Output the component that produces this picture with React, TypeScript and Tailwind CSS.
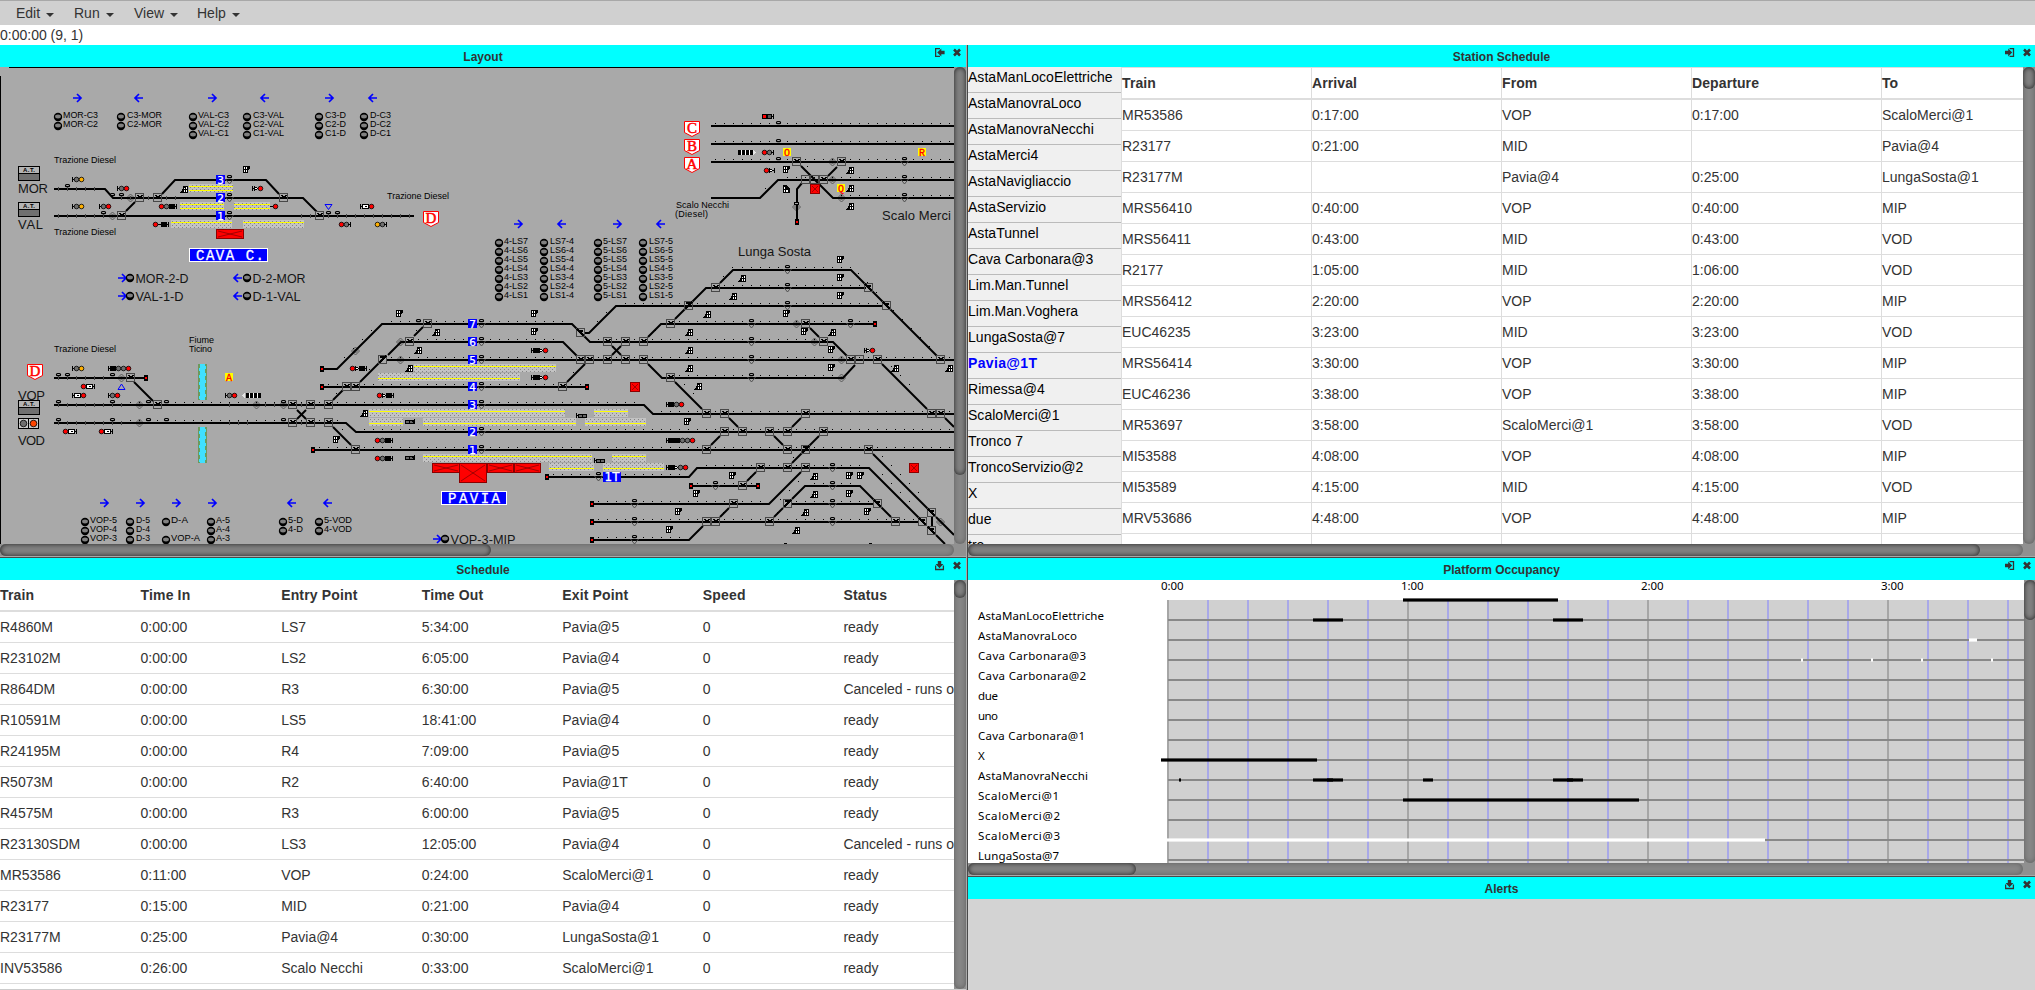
import React from "react";

const sans = "font-['Liberation_Sans',Arial,sans-serif]";

/* ---------- track diagram helpers: 9px cells, rows measured from y = 67 ---------- */
const colX = (c: number) => c * 9;
const rowY = (r: number) => 72 + r * 9;

const tracks: number[][] = [
  [54, 189, 105, 189, 113, 198, 303, 198, 317, 212],
  [54, 216, 414, 216],
  [162, 194, 175, 180, 266, 180, 279, 194],
  [126, 211, 135, 202],
  [711, 126, 954, 126],
  [711, 144, 954, 144],
  [711, 162, 954, 162],
  [711, 198, 760, 198, 778, 180, 954, 180],
  [801, 166, 833, 198, 954, 198],
  [837, 167, 828, 176],
  [802, 183, 797, 189, 797, 220],
  [675, 319, 706, 288, 866, 288],
  [720, 283, 733, 270, 851, 270, 937, 356],
  [584, 333, 589, 333, 616, 306, 882, 306],
  [320, 369, 337, 369, 382, 324, 572, 324, 590, 342, 833, 342, 847, 356],
  [648, 337, 661, 324, 875, 324],
  [388, 355, 401, 342, 563, 342, 577, 356],
  [387, 360, 954, 360],
  [414, 336, 423, 327],
  [360, 382, 382, 360],
  [333, 400, 343, 390],
  [322, 387, 587, 387],
  [567, 382, 585, 364],
  [648, 364, 662, 378, 843, 378, 855, 365],
  [675, 382, 702, 409],
  [54, 405, 644, 405, 653, 414, 954, 414],
  [54, 423, 346, 423, 356, 432, 954, 432],
  [313, 450, 954, 450],
  [333, 427, 351, 445],
  [297, 410, 306, 419],
  [306, 410, 297, 419],
  [612, 346, 621, 355],
  [621, 346, 612, 355],
  [729, 418, 738, 427],
  [711, 445, 720, 436],
  [801, 418, 792, 427],
  [774, 436, 783, 445],
  [819, 436, 792, 463],
  [882, 364, 927, 409],
  [945, 418, 954, 427],
  [810, 328, 819, 337],
  [547, 477, 689, 477, 697, 468, 869, 468, 919, 518],
  [691, 486, 758, 486],
  [747, 481, 756, 472],
  [592, 504, 769, 504, 801, 472],
  [792, 504, 873, 504],
  [792, 499, 805, 486, 860, 486, 891, 517],
  [783, 508, 774, 517],
  [592, 522, 918, 522],
  [720, 517, 729, 508],
  [592, 540, 689, 540, 703, 526],
  [873, 454, 928, 509],
  [936, 517, 954, 535],
  [932, 517, 932, 527],
  [936, 535, 945, 544],
  [54, 378, 146, 378],
  [134, 382, 153, 401],
];

const dotRuns: [number, number, number][] = [
  [6, 79, 105], [8, 79, 105], [10, 79, 105], [12, 87, 105], [14, 93, 105],
  [22, 82, 94], [24, 79, 95], [26, 69, 97], [28, 43, 62], [28, 74, 96], [30, 45, 61],
  [30, 66, 91], [32, 43, 105], [34, 74, 92], [35, 36, 64], [37, 14, 70], [38, 73, 105],
  [39, 14, 37], [40, 40, 105], [42, 35, 105], [44, 78, 95], [45, 61, 75], [46, 77, 83],
  [46, 90, 94], [48, 66, 84], [48, 88, 96], [50, 66, 101], [52, 66, 75],
];
/* single dots beside diagonal track: x, y */
const diagonalDots: [number, number][] = [
  [723, 276], [732, 267], [858, 273], [867, 282], [876, 292], [893, 310], [902, 319], [911, 328],
  [920, 337], [929, 346], [687, 303], [597, 321], [606, 312], [371, 330], [362, 339], [353, 348],
  [344, 357], [416, 330], [369, 369], [336, 393], [573, 372], [655, 330], [684, 384], [693, 393],
  [342, 429], [780, 499], [789, 490], [798, 481], [882, 474], [891, 483], [900, 492], [909, 501],
  [882, 456], [891, 465], [900, 474], [909, 483], [918, 492], [891, 366], [900, 375], [909, 384],
  [777, 512], [723, 512], [750, 476], [793, 457], [807, 166], [812, 176], [822, 187], [765, 188],
];
const tickRuns: [number, number[]][] = [
  [13, [6, 7, 8, 9, 10]],
  [14, [13, 14, 16, 18, 19]],
  [16, [6, 7, 8, 9, 10, 11, 33, 34, 36, 37, 38, 39, 40, 41, 42, 43, 44, 45]],
  [34, [6, 7, 8, 9, 10, 11]],
  [37, [6, 7, 8, 9, 10, 11, 12, 13, 25, 29, 30, 33]],
  [39, [6, 7, 8, 9, 10, 11, 12, 13, 25, 26, 27, 33]],
];

/* col, row, kind: 0 bowl, 1 rising diagonal, 2 falling diagonal, 3 empty */
const switches: [number, number, number][] = [
  [15, 14, 0], [17, 14, 0], [13, 16, 0], [31, 14, 0], [35, 16, 0],
  [14, 34, 0], [17, 37, 0], [32, 37, 0], [34, 37, 0], [36, 37, 0],
  [32, 39, 0], [34, 39, 0], [36, 39, 0], [39, 42, 0], [38, 35, 0], [39, 35, 0],
  [42, 32, 1], [45, 30, 0], [47, 28, 0], [64, 29, 2], [74, 28, 0], [89, 28, 0],
  [76, 26, 1], [98, 26, 2], [67, 30, 0], [69, 30, 0], [71, 30, 0], [91, 30, 0],
  [64, 32, 0], [65, 32, 0], [67, 32, 0], [69, 32, 0], [71, 32, 0], [94, 32, 0],
  [95, 32, 3], [97, 32, 0], [104, 32, 0], [74, 34, 0], [62, 35, 0],
  [78, 38, 0], [80, 38, 0], [89, 38, 0], [103, 38, 0], [104, 38, 0],
  [80, 40, 0], [82, 40, 0], [85, 40, 0], [87, 40, 0], [91, 40, 0],
  [78, 42, 0], [87, 42, 0], [89, 42, 1], [96, 42, 0],
  [84, 44, 0], [87, 44, 0], [89, 44, 0], [82, 46, 0],
  [81, 48, 0], [87, 48, 1], [97, 48, 2], [78, 50, 0], [79, 50, 0], [85, 50, 0],
  [99, 50, 0], [102, 50, 2], [103, 49, 2], [103, 51, 2],
  [88, 10, 0], [93, 10, 0], [89, 12, 3], [90, 12, 3], [91, 12, 0], [79, 24, 0], [96, 24, 2],
];

const loops: [number, number][] = [
  [7, 13], [12, 14], [13, 14], [11, 16], [36, 16], [37, 16], [86, 6], [86, 8], [86, 10],
  [6, 34], [7, 34], [12, 34], [6, 37], [12, 37], [16, 37], [18, 37], [31, 37],
  [6, 39], [12, 39], [16, 39], [18, 39], [31, 39], [46, 28],
];
const pins: [number, number][] = [
  [25, 12], [25, 14], [25, 16], [100, 10], [100, 12], [100, 14], [87, 22], [87, 24],
  [53, 28], [53, 30], [53, 32], [53, 35], [53, 37], [53, 40], [53, 42], [87, 26],
  [83, 28], [94, 28], [83, 30], [83, 32], [83, 34], [66, 45], [92, 44], [79, 46],
  [92, 46], [70, 48], [92, 48], [70, 50], [92, 50], [70, 52],
];
const diamonds: [number, number][] = [
  [14, 14], [12, 16], [92, 10], [92, 12], [93, 14], [88, 15], [13, 34], [15, 37], [15, 39],
  [28, 37], [31, 37], [39, 31], [44, 30], [44, 32], [88, 28], [90, 30], [93, 32], [93, 34],
  [104, 50],
];
const bumpers: [number, number][] = [
  [797, 222], [322, 369], [322, 387], [587, 387], [146, 378], [313, 450], [875, 324],
  [547, 477], [691, 486], [758, 486], [592, 504], [592, 522], [592, 540],
];
const flagsDown: [number, number][] = [
  [246, 169], [786, 169], [840, 259], [840, 277], [840, 295], [534, 313], [534, 331],
  [786, 313], [804, 331], [831, 349], [831, 367], [687, 421], [732, 475], [696, 493],
  [678, 511], [669, 529], [849, 475], [860, 475], [849, 493], [867, 511], [399, 313], [336, 439],
];
const flagsUp: [number, number][] = [
  [184, 190], [850, 171], [850, 189], [850, 207], [742, 279], [733, 297], [707, 315],
  [689, 333], [689, 351], [689, 369], [698, 387], [832, 333], [895, 369], [949, 369],
  [814, 477], [814, 495], [805, 513], [796, 531], [436, 333], [418, 351], [409, 369], [364, 414],
];
const signals: [number, number, string][] = [
  [72, 179, "Tgy"], [117, 188, "Tgr"], [72, 206, "Tgy"], [99, 206, "Tgr"],
  [159, 206, "rgkt"], [153, 224, "r-kt"], [252, 188, "Tlr"], [270, 206, "-r"],
  [360, 206, "Twr"], [339, 224, "rgt"], [375, 224, "ygt"],
  [762, 116, "RGt"], [762, 152, "rgt"], [764, 170, "rlt"],
  [72, 368, "Tgy"], [108, 368, "Tkggr"], [81, 386, "rwt"], [72, 395, "Twr"],
  [108, 395, "Tgr"], [225, 395, "Tgr"], [63, 431, "rwt"], [99, 431, "rwt"],
  [350, 368, "rlkt"], [377, 395, "rlkt"], [375, 440, "rgkt"], [375, 458, "rgkt"],
  [405, 421, "Hht"], [405, 457, "Hht"],
  [531, 350, "Tklr"], [531, 377, "Tklr"], [864, 350, "Tlr"], [666, 404, "Tkgr"],
  [666, 440, "Tkkggr"], [666, 467, "Tklgr"], [576, 415, "Thh"], [594, 460, "Thh"],
];

/* x, y, width, yellow edge: t top, b bottom, d both */
const platforms: [number, number, number, string][] = [
  [189, 184, 44, "d"], [180, 202, 44, "d"], [234, 202, 36, "d"], [171, 220, 61, "t"],
  [243, 220, 61, "t"], [414, 364, 142, "t"], [378, 373, 142, "b"], [369, 409, 196, "t"],
  [369, 418, 34, "b"], [423, 418, 153, "b"], [594, 409, 34, "t"], [585, 418, 61, "b"],
  [423, 454, 169, "t"], [612, 454, 34, "t"], [549, 463, 45, "b"], [603, 463, 61, "b"],
];
const buildings: [number, number, number, number][] = [
  [216, 229, 28, 10], [432, 463, 28, 10], [487, 463, 27, 10], [514, 463, 27, 10],
  [459, 463, 28, 20], [810, 184, 10, 10], [630, 382, 10, 10], [909, 463, 10, 10],
];
const arrows: [number, number, 1 | -1][] = [
  [77, 98, 1], [139, 98, -1], [212, 98, 1], [265, 98, -1], [329, 98, 1], [373, 98, -1],
  [122, 278, 1], [238, 278, -1], [122, 296, 1], [238, 296, -1],
  [104, 503, 1], [140, 503, 1], [176, 503, 1], [212, 503, 1], [292, 503, -1], [328, 503, -1],
  [437, 539, 1], [518, 224, 1], [562, 224, -1], [617, 224, 1], [661, 224, -1],
];
/* circle x, y, text x, labels, label width */
const routes: [number, number, number, string[], number][] = [
  [58, 117, 63, ["MOR-C3", "MOR-C2"], 35],
  [121, 117, 127, ["C3-MOR", "C2-MOR"], 35],
  [193, 117, 198, ["VAL-C3", "VAL-C2", "VAL-C1"], 31],
  [247, 117, 253, ["C3-VAL", "C2-VAL", "C1-VAL"], 31],
  [319, 117, 325, ["C3-D", "C2-D", "C1-D"], 21],
  [364, 117, 370, ["D-C3", "D-C2", "D-C1"], 21],
  [499, 243, 504, ["4-LS7", "4-LS6", "4-LS5", "4-LS4", "4-LS3", "4-LS2", "4-LS1"], 24],
  [544, 243, 550, ["LS7-4", "LS6-4", "LS5-4", "LS4-4", "LS3-4", "LS2-4", "LS1-4"], 24],
  [598, 243, 603, ["5-LS7", "5-LS6", "5-LS5", "5-LS4", "5-LS3", "5-LS2", "5-LS1"], 24],
  [643, 243, 649, ["LS7-5", "LS6-5", "LS5-5", "LS4-5", "LS3-5", "LS2-5", "LS1-5"], 24],
  [85, 522, 90, ["VOP-5", "VOP-4", "VOP-3"], 27],
  [130, 522, 136, ["D-5", "D-4", "D-3"], 14],
  [166, 522, 171, ["D-A"], 17],
  [166, 540, 171, ["VOP-A"], 29],
  [211, 522, 216, ["A-5", "A-4", "A-3"], 14],
  [283, 522, 288, ["5-D", "4-D"], 15],
  [283, 549, 288, ["3-D"], 15],
  [319, 522, 324, ["5-VOD", "4-VOD"], 28],
  [319, 549, 324, ["3-VOD"], 28],
];
const bigRoutes: [number, number, string, number][] = [
  [130, 278, "MOR-2-D", 53], [247, 278, "D-2-MOR", 53], [130, 296, "VAL-1-D", 48],
  [247, 296, "D-1-VAL", 48], [445, 539, "VOP-3-MIP", 65],
];
const captions: [number, number, string, number, number][] = [
  [54, 163, "Trazione Diesel", 62, 9], [54, 235, "Trazione Diesel", 62, 9],
  [387, 199, "Trazione Diesel", 62, 9], [54, 352, "Trazione Diesel", 62, 9],
  [189, 343, "Fiume", 25, 9], [189, 352, "Ticino", 23, 9],
  [676, 208, "Scalo Necchi", 53, 9], [675, 217, "(Diesel)", 33, 9],
  [18, 193, "MOR", 30, 13], [18, 229, "VAL", 25, 13], [18, 400, "VOP", 27, 13],
  [18, 445, "VOD", 27, 13], [882, 220, "Scalo Merci", 69, 13], [738, 256, "Lunga Sosta", 73, 13],
];
const trackNumbers: [number, number, string, number][] = [
  [216, 175, "3", 9], [216, 193, "2", 9], [216, 211, "1", 9], [468, 319, "7", 9],
  [468, 337, "6", 9], [468, 355, "5", 9], [468, 382, "4", 9], [468, 400, "3", 9],
  [468, 427, "2", 9], [468, 445, "1", 9], [603, 472, "1T", 18],
];
const shields: [number, number, string][] = [
  [423, 211, "D"], [684, 121, "C"], [684, 139, "B"], [684, 157, "A"], [27, 364, "D"],
];
const yellowTags: [number, number, string][] = [
  [783, 148, "O"], [918, 148, "R"], [837, 184, "Q"], [225, 373, "A"],
];

function Signal({ x, y, spec }: { x: number; y: number; spec: string }) {
  const out: React.ReactNode[] = [];
  let p = x;
  const fills: Record<string, string> = { g: "#6f6f6f", y: "#ffb000", r: "#ff0000" };
  spec.split("").forEach((ch, i) => {
    if (ch === "T") {
      out.push(<path key={i} d={`M${p + 0.5} ${y - 2}v5M${p} ${y + 0.5}h3`} stroke="#000" fill="none" />);
      p += 2;
    } else if (ch === "t") {
      out.push(<path key={i} d={`M${p + 1.5} ${y - 2}v5M${p - 1} ${y + 0.5}h3`} stroke="#000" fill="none" />);
      p += 2;
    } else if (ch === "-") {
      out.push(<rect key={i} x={p} y={y} width={3} height={1} />);
      p += 3;
    } else if (ch === "k") {
      out.push(<rect key={i} x={p} y={y - 2} width={6} height={5} />);
      p += 6;
    } else if (ch === "w") {
      out.push(<rect key={i} x={p + 0.5} y={y - 1.5} width={6} height={4} fill="#fff" stroke="#000" />);
      out.push(<rect key={`${i}a`} x={p + 2.5} y={y} width={2} height={1} />);
      p += 7;
    } else if (ch === "l") {
      out.push(<path key={i} d={`M${p + 0.5} ${y - 1.5}l3 2l-3 2z`} fill="#fff" stroke="#000" />);
      p += 4;
    } else if (ch === "R" || ch === "G") {
      out.push(<rect key={i} x={p + 0.5} y={y - 1.5} width={4} height={4} fill={ch === "R" ? "#f00" : "#555"} stroke="#000" />);
      p += 5;
    } else if (ch === "H" || ch === "h") {
      out.push(<rect key={i} x={p + 0.5} y={y - 1} width={3.5} height={3} fill="#666" stroke="#000" />);
      p += 4;
    } else {
      out.push(<circle key={i} cx={p + 2.5} cy={y + 0.5} r={2.3} fill={fills[ch]} stroke="#000" strokeWidth={0.8} shapeRendering="auto" />);
      p += 5;
    }
  });
  return <g>{out}</g>;
}

function RouteButton({ x, y }: { x: number; y: number }) {
  return (
    <g shapeRendering="auto">
      <circle cx={x} cy={y} r={4.2} />
      <ellipse cx={x} cy={y - 0.5} rx={2.9} ry={1.9} fill="#808080" />
    </g>
  );
}

function DirectionArrow({ x, y, dir }: { x: number; y: number; dir: 1 | -1 }) {
  return (
    <path
      d={`M${x - 4 * dir} ${y}h${8 * dir}M${x} ${y - 4}l${4 * dir} 4l${-4 * dir} 4`}
      stroke="#0000ff" strokeWidth={1.7} fill="none" shapeRendering="auto"
    />
  );
}

function PowerBox({ y }: { y: number }) {
  return (
    <g>
      <rect x={18.5} y={y + 0.5} width={21} height={14} fill="#b4b4b4" stroke="#000" />
      <rect x={19} y={y + 8} width={20} height={6} fill="#707070" />
      <rect x={19} y={y + 7} width={20} height={1} />
      <text x={23} y={y + 6} fontSize={6} fontWeight="bold" textLength={12}>A.T.</text>
    </g>
  );
}

function LayoutDiagram() {
  return (
    <svg
      width={954} height={477} viewBox="0 67 954 477" shapeRendering="crispEdges"
      fontFamily="'Liberation Sans', Arial, sans-serif" className="block shrink-0"
    >
      <defs>
        <pattern id="gravel" width={4} height={4} patternUnits="userSpaceOnUse">
          <rect width={4} height={4} fill="#c3c3c3" />
          <rect x={0} y={1} width={1} height={1} fill="#858585" />
          <rect x={2} y={3} width={1} height={1} fill="#858585" />
        </pattern>
      </defs>
      <rect x={0} y={67} width={954} height={477} fill="#a9a9a9" />
      <rect x={9} y={67} width={945} height={1} />
      <rect x={0} y={76} width={1} height={468} />

      {[364, 427].map((y) => (
        <g key={y}>
          <rect x={198} y={y} width={9} height={36} fill="#6b9a5e" />
          <rect x={200} y={y} width={5} height={36} fill="#40e0ff" />
          {[2, 9, 16, 23, 30].map((d) => (
            <g key={d} fill="#40e0ff">
              <rect x={199} y={y + d + 2} width={1} height={3} />
              <rect x={205} y={y + d} width={1} height={3} />
            </g>
          ))}
        </g>
      ))}

      {platforms.map(([x, y, w, e]) => (
        <g key={`${x}-${y}`}>
          <rect x={x} y={y} width={w} height={8} fill="url(#gravel)" />
          {(e === "t" || e === "d") && <rect x={x} y={y + 2} width={w} height={1} fill="#ffff00" />}
          {e === "d" && <rect x={x} y={y + 6} width={w} height={1} fill="#ffff00" />}
          {e === "b" && <rect x={x} y={y + 5} width={w} height={1} fill="#ffff00" />}
        </g>
      ))}

      {diamonds.map(([c, r]) => {
        const x = colX(c) + 4.5;
        const y = rowY(r);
        return (
          <g key={`${c}-${r}`} fill="none" stroke="#505050" strokeWidth={0.9} shapeRendering="auto">
            <path d={`M${x - 4} ${y}l4 -4l4 4l-4 4z`} />
            <path d={`M${x - 2} ${y}l2 -2l2 2l-2 2z`} />
          </g>
        );
      })}

      {tracks.map((t, i) => (
        <polyline
          key={i} points={t.join(" ")} fill="none" stroke="#000" strokeWidth={2}
          shapeRendering={t.length === 4 && t[1] === t[3] ? "crispEdges" : "auto"}
        />
      ))}
      {dotRuns.map(([r, a, b]) =>
        Array.from({ length: b - a + 1 }, (_, i) => (
          <rect key={`${r}-${a + i}`} x={colX(a + i) + 4} y={rowY(r) - 3} width={1} height={1} />
        )),
      )}
      {diagonalDots.map(([x, y]) => <rect key={`${x}-${y}`} x={x} y={y} width={1} height={1} />)}
      {tickRuns.map(([r, cs]) =>
        cs.map((c) => <rect key={`${r}-${c}`} x={colX(c) + 4} y={rowY(r) - 2} width={1} height={4} fill="#4a4a4a" />),
      )}

      {switches.map(([c, r, k]) => {
        const x = colX(c);
        const y = rowY(r) - 5;
        return (
          <g key={`${c}-${r}`}>
            <rect x={x + 0.5} y={y + 0.5} width={8} height={8} fill="none" stroke="#484848" />
            {k === 0 && (
              <g>
                <rect x={x + 1} y={y + 1} width={7} height={3} fill="#a9a9a9" />
                <path d={`M${x + 2} ${y + 1.5}v1h1v1h3v-1h1v-1`} fill="none" stroke="#000" />
              </g>
            )}
            {k === 1 && <path d={`M${x + 1} ${y + 8}L${x + 8} ${y + 1}M${x + 2} ${y + 2}h4`} stroke="#000" strokeWidth={1.8} />}
            {k === 2 && <path d={`M${x + 1} ${y + 1}L${x + 8} ${y + 8}M${x + 3} ${y + 3}h4`} stroke="#000" strokeWidth={1.8} />}
          </g>
        );
      })}
      {[...loops, ...pins].map(([c, r]) => (
        <rect
          key={`${c}-${r}`} x={colX(c) + 2.5} y={rowY(r) - 4.5} width={4} height={2.2} rx={1}
          fill="#a9a9a9" stroke="#000" strokeWidth={1.2} shapeRendering="auto"
        />
      ))}
      {pins.map(([c, r]) => (
        <path
          key={`${c}-${r}`} d={`M${colX(c) + 0.5} ${rowY(r) - 1}l4 5l4 -5`}
          fill="none" stroke="#505050" shapeRendering="auto"
        />
      ))}
      <rect x={794.5} y={202.5} width={4} height={2} fill="#a9a9a9" stroke="#000" />
      {[784, 869].map((x) => <rect key={x} x={x} y={543} width={3} height={1} />)}

      {bumpers.map(([x, y]) => (
        <g key={`${x}-${y}`}>
          <rect x={x - 2} y={y - 3} width={4} height={6} />
          <rect x={x - 1} y={y - 1} width={2} height={2} fill="#ff0000" />
        </g>
      ))}

      {flagsDown.map(([x, y]) => (
        <g key={`${x}-${y}`}>
          <rect x={x - 3} y={y - 3} width={5} height={7} />
          <rect x={x - 2} y={y - 2} width={1} height={2} fill="#fff" />
          <rect x={x} y={y - 2} width={1} height={2} fill="#fff" />
          <rect x={x - 2} y={y + 1} width={1} height={2} fill="#fff" />
          <rect x={x} y={y + 1} width={1} height={2} fill="#fff" />
          <path d={`M${x + 1} ${y - 3}h3v2l-3 4z`} />
        </g>
      ))}
      {flagsUp.map(([x, y]) => (
        <g key={`${x}-${y}`}>
          <rect x={x - 1} y={y - 4} width={5} height={7} />
          <rect x={x} y={y - 2} width={1} height={1} fill="#fff" />
          <rect x={x + 2} y={y - 3} width={1} height={2} fill="#fff" />
          <rect x={x} y={y} width={1} height={2} fill="#fff" />
          <rect x={x + 2} y={y} width={1} height={2} fill="#fff" />
          <path d={`M${x - 4} ${y + 3}h4v-6z`} />
        </g>
      ))}
      <g>
        <path d="M783 185h3l4 4v4h-7z" />
        <rect x={784} y={187} width={1} height={2} fill="#fff" />
        <rect x={784} y={190} width={1} height={2} fill="#fff" />
        <rect x={786} y={190} width={2} height={2} fill="#fff" />
      </g>

      {signals.map(([x, y, s]) => <Signal key={`${x}-${y}`} x={x} y={y} spec={s} />)}

      {[738, 246].map((x, k) => (
        <g key={x} transform={`translate(${x} ${k === 0 ? 150 : 393})`}>
          <rect width={14} height={5} fill="#fff" />
          {[0, 4, 8, 12].map((d) => <rect key={d} x={d} width={2.6} height={5} />)}
          <path d={k === 0 ? "M15 0l3 2.5l-3 2.5z" : "M-1 0l-3 2.5l3 2.5z"} fill="#e4e4e4" />
        </g>
      ))}

      {buildings.map(([x, y, w, h]) => (
        <g key={`${x}-${y}`} stroke="#8b0000">
          <rect x={x + 0.5} y={y + 0.5} width={w - 1} height={h - 1} fill="#ff0000" />
          <path d={`M${x + 2} ${y + 2}L${x + w - 2} ${y + h - 2}M${x + w - 2} ${y + 2}L${x + 2} ${y + h - 2}`} strokeWidth={0.8} shapeRendering="auto" />
        </g>
      ))}

      <path d="M325 204.500h7l-3.500 5z" fill="none" stroke="#0000ff" shapeRendering="auto" />
      <path d="M118 389.500h7l-3.500 -5.500z" fill="none" stroke="#0000ff" shapeRendering="auto" />

      {trackNumbers.map(([x, y, s, w]) => (
        <g key={`${x}-${y}`}>
          <rect x={x} y={y} width={w} height={w === 9 ? 9 : 10} fill="#0000ff" />
          <text x={x + w / 2} y={y + 8.5} fontSize={w === 9 ? 10.5 : 12} fill="#fff" stroke="#fff" strokeWidth={0.25} textAnchor="middle" fontFamily="'DejaVu Sans', sans-serif">{s}</text>
        </g>
      ))}

      <rect x={189.5} y={248.500} width={78} height={13} fill="#0000ff" stroke="#fff" />
      <text x={196} y={260} fontSize={14} fill="#fff" stroke="#fff" strokeWidth={0.3} textLength={68} fontFamily="'Liberation Mono', monospace">CAVA C.</text>
      <rect x={441.5} y={491.5} width={65} height={13} fill="#0000ff" stroke="#fff" />
      <text x={448} y={503} fontSize={14} fill="#fff" stroke="#fff" strokeWidth={0.3} textLength={52} fontFamily="'Liberation Mono', monospace">PAVIA</text>

      {shields.map(([x, y, s]) => (
        <g key={`${x}-${y}`}>
          <path d={`M${x + 0.5} ${y + 0.5}h15v11l-7.5 4l-7.500 -4z`} fill="#fff" stroke="#ff0000" shapeRendering="auto" />
          <text x={x + 8} y={y + 12} fontSize={15} fill="#ff0000" stroke="#ff0000" strokeWidth={0.5} textAnchor="middle" fontFamily="'Liberation Serif', serif">{s}</text>
        </g>
      ))}
      {yellowTags.map(([x, y, s]) => (
        <g key={`${x}-${y}`}>
          <rect x={x} y={y} width={8} height={8} fill="#ffff00" />
          <text x={x + 4} y={y + 7.5} fontSize={10} fill="#ff0000" stroke="#ff0000" strokeWidth={0.3} textAnchor="middle" fontFamily="'Liberation Mono', monospace">{s}</text>
        </g>
      ))}

      <PowerBox y={166} />
      <PowerBox y={202} />
      <PowerBox y={400} />
      <rect x={18.5} y={418.5} width={20} height={10} fill="#c8c8c8" stroke="#000" />
      <rect x={28} y={418} width={1} height={11} />
      <circle cx={23.5} cy={423.5} r={3.3} fill="#6f6f6f" stroke="#000" strokeWidth={0.8} shapeRendering="auto" />
      <circle cx={33.500} cy={423.5} r={3.3} fill="#ff4500" stroke="#000" strokeWidth={0.8} shapeRendering="auto" />

      {arrows.map(([x, y, d]) => <DirectionArrow key={`${x}-${y}`} x={x} y={y} dir={d} />)}
      {routes.map(([x, y, tx, labels, w]) =>
        labels.map((l, i) => (
          <g key={`${l}-${x}`}>
            <RouteButton x={x} y={y + i * 9} />
            <text x={tx} y={y + 1 + i * 9} fontSize={9.5} textLength={w} lengthAdjust="spacingAndGlyphs">{l}</text>
          </g>
        )),
      )}
      {bigRoutes.map(([x, y, l, w]) => (
        <g key={l}>
          <RouteButton x={x} y={y} />
          <text x={x + 5.5} y={y + 5} fontSize={13} fill="#151515" textLength={w} lengthAdjust="spacingAndGlyphs">{l}</text>
        </g>
      ))}
      {captions.map(([x, y, l, w, s]) => (
        <text key={`${x}-${y}`} x={x} y={y} fontSize={s} fill={s === 13 ? "#151515" : "#000"} textLength={w}>{l}</text>
      ))}
    </svg>
  );
}

/* ---------- platform occupancy chart ---------- */
const occupancyRows = [
  "AstaManLocoElettriche", "AstaManovraLoco", "Cava Carbonara@3", "Cava Carbonara@2", "due", "uno",
  "Cava Carbonara@1", "X", "AstaManovraNecchi", "ScaloMerci@1", "ScaloMerci@2", "ScaloMerci@3", "LungaSosta@7",
];
const occupancyWidths = [126, 99, 108, 108, 20, 20, 107, 7, 110, 81, 82, 82, 81];
const bars: [number, number, number, string][] = [
  [1403, 1558, 600, "#000"], [1313, 1343, 620, "#000"], [1553, 1583, 620, "#000"],
  [1161, 1317, 760, "#000"], [1179, 1181, 780, "#000"], [1313, 1343, 780, "#000"],
  [1327, 1333, 780, "#000"], [1423, 1433, 780, "#000"], [1553, 1583, 780, "#000"],
  [1567, 1573, 780, "#000"], [1403, 1639, 800, "#000"], [1167, 1765, 840, "#fff"],
  [1969, 1977, 640, "#fff"], [1801, 1803, 660, "#fff"], [1871, 1873, 660, "#fff"],
  [1921, 1923, 660, "#fff"], [1991, 1993, 660, "#fff"],
];

function OccupancyChart() {
  return (
    <svg
      width={1056} height={283} viewBox="968 580 1056 283" shapeRendering="crispEdges"
      fontFamily="'Noto Sans', sans-serif" fontSize={11.5} className="block shrink-0"
    >
      <rect x={968} y={580} width={1056} height={283} fill="#fff" />
      <rect x={1167} y={600} width={857} height={263} fill="#d0d0d0" />
      {Array.from({ length: 22 }, (_, i) => (
        <rect key={i} x={1167 + i * 40} y={600} width={2} height={263} fill={i % 6 === 0 ? "#a6a6a6" : "#a8a8e8"} />
      ))}
      {occupancyRows.map((name, i) => (
        <g key={name}>
          <rect x={1168} y={619 + i * 20} width={856} height={2} fill="#888" />
          <text x={978} y={620 + i * 20} textLength={occupancyWidths[i]}>{name}</text>
        </g>
      ))}
      {bars.map(([a, b, y, c], i) => (
        <g key={i} fill={c}>
          <rect x={a} y={y - 2} width={b - a} height={4} opacity={0.6} />
          <rect x={a} y={y - 1} width={b - a} height={2} />
        </g>
      ))}
      {[0, 1, 2, 3].map((h) => (
        <text key={h} x={1161 + h * 240} y={590} textLength={22.5}>{`${h}:00`}</text>
      ))}
    </svg>
  );
}

/* ---------- panel chrome ---------- */
function PanelIcon({ kind }: { kind: "out" | "in" | "save" }) {
  return (
    <svg width={10} height={10} viewBox="0 0 10 10" fill="#333" className="block">
      {kind === "out" && (
        <>
          <path d="M5 .6H.6v7.800h4.400" fill="none" stroke="#333" strokeWidth={1.3} />
          <path d="M9.600 6.200H6.300v2.200L2.200 4.500L6.300 .6v2.200h3.300z" />
        </>
      )}
      {kind === "in" && (
        <>
          <path d="M4.600 .6h3.900v7.800H4.600" fill="none" stroke="#333" strokeWidth={1.3} />
          <path d="M0 2.800h3.200V.6L7.200 4.500L3.200 8.400V6.200H0z" />
        </>
      )}
      {kind === "save" && (
        <>
          <path d="M.6 4.500v4h7.800v-4" fill="none" stroke="#333" strokeWidth={1.3} />
          <path d="M2.800 0h3.400v3h2.200L4.500 7.200L.6 3h2.200z" />
        </>
      )}
    </svg>
  );
}

function PanelHeader({ title, icon, inset }: { title: string; icon: "out" | "in" | "save"; inset: string }) {
  return (
    <div className="relative h-[22px] shrink-0 bg-[#00ffff] text-center text-[12px] leading-[24px] font-bold text-[#333]">
      {title}
      <div className={`absolute top-[3px] flex gap-[8px] ${inset}`}>
        <PanelIcon kind={icon} />
        <svg width={8} height={9} viewBox="0 0 8 9" className="block">
          <path d="M1 1.500l6 6M7 1.500l-6 6" stroke="#333" strokeWidth={2.500} />
        </svg>
      </div>
    </div>
  );
}

const bevel = "rounded-full bg-[#808080] shadow-[inset_0_0_5px_rgba(0,0,0,0.75)]";
const trough = "rounded-full bg-[#868686] shadow-[inset_0_0_5px_rgba(0,0,0,0.3)]";

function VBar({ thumb }: { thumb: string }) {
  return (
    <div className="w-[12px] shrink-0 self-stretch bg-[#909090]">
      <div className={`h-full w-[12px] ${trough}`}>
        <div className={`w-[12px] ${thumb} ${bevel}`} />
      </div>
    </div>
  );
}

function HBar({ thumb }: { thumb: string }) {
  return (
    <div className="flex h-[12px] shrink-0 bg-[#909090]">
      <div className={`h-[12px] flex-1 ${trough}`}>
        <div className={`h-[12px] ${thumb} ${bevel}`} />
      </div>
      <div className="w-[12px] bg-[#909090]" />
    </div>
  );
}

function Divider() {
  return <div className="h-[2px] shrink-0 border-b border-[#4a4a4a] bg-[#a9a9a9]" />;
}

/* ---------- tables ---------- */
const scheduleHead = ["Train", "Time In", "Entry Point", "Time Out", "Exit Point", "Speed", "Status"];
const schedule = [
  ["R4860M", "0:00:00", "LS7", "5:34:00", "Pavia@5", "0", "ready"],
  ["R23102M", "0:00:00", "LS2", "6:05:00", "Pavia@4", "0", "ready"],
  ["R864DM", "0:00:00", "R3", "6:30:00", "Pavia@5", "0", "Canceled - runs on"],
  ["R10591M", "0:00:00", "LS5", "18:41:00", "Pavia@4", "0", "ready"],
  ["R24195M", "0:00:00", "R4", "7:09:00", "Pavia@5", "0", "ready"],
  ["R5073M", "0:00:00", "R2", "6:40:00", "Pavia@1T", "0", "ready"],
  ["R4575M", "0:00:00", "R3", "6:00:00", "Pavia@5", "0", "ready"],
  ["R23130SDM", "0:00:00", "LS3", "12:05:00", "Pavia@4", "0", "Canceled - runs on"],
  ["MR53586", "0:11:00", "VOP", "0:24:00", "ScaloMerci@1", "0", "ready"],
  ["R23177", "0:15:00", "MID", "0:21:00", "Pavia@4", "0", "ready"],
  ["R23177M", "0:25:00", "Pavia@4", "0:30:00", "LungaSosta@1", "0", "ready"],
  ["INV53586", "0:26:00", "Scalo Necchi", "0:33:00", "ScaloMerci@1", "0", "ready"],
];

const stations = [
  "AstaManLocoElettriche", "AstaManovraLoco", "AstaManovraNecchi", "AstaMerci4", "AstaNavigliaccio",
  "AstaServizio", "AstaTunnel", "Cava Carbonara@3", "Lim.Man.Tunnel", "Lim.Man.Voghera", "LungaSosta@7",
  "Pavia@1T", "Rimessa@4", "ScaloMerci@1", "Tronco 7", "TroncoServizio@2", "X", "due", "tre",
];
const stationHead = ["Train", "Arrival", "From", "Departure", "To"];
const stationRows = [
  ["MR53586", "0:17:00", "VOP", "0:17:00", "ScaloMerci@1"],
  ["R23177", "0:21:00", "MID", "", "Pavia@4"],
  ["R23177M", "", "Pavia@4", "0:25:00", "LungaSosta@1"],
  ["MRS56410", "0:40:00", "VOP", "0:40:00", "MIP"],
  ["MRS56411", "0:43:00", "MID", "0:43:00", "VOD"],
  ["R2177", "1:05:00", "MID", "1:06:00", "VOD"],
  ["MRS56412", "2:20:00", "VOP", "2:20:00", "MIP"],
  ["EUC46235", "3:23:00", "MID", "3:23:00", "VOD"],
  ["MRS56414", "3:30:00", "VOP", "3:30:00", "MIP"],
  ["EUC46236", "3:38:00", "VOP", "3:38:00", "MIP"],
  ["MR53697", "3:58:00", "ScaloMerci@1", "3:58:00", "VOD"],
  ["MI53588", "4:08:00", "VOP", "4:08:00", "MIP"],
  ["MI53589", "4:15:00", "MID", "4:15:00", "VOD"],
  ["MRV53686", "4:48:00", "VOP", "4:48:00", "MIP"],
  ["", "", "", "", ""],
];

function ScheduleTable() {
  return (
    <div className="min-w-0 flex-1 overflow-hidden bg-white">
      <div className="w-[984px]">
        <div className="grid grid-cols-7 border-b-2 border-[#ddd] py-[5px] font-bold tracking-[0.15px]">
          {scheduleHead.map((h) => <div key={h}>{h}</div>)}
        </div>
        {schedule.map((row) => (
          <div key={row[0]} className="grid grid-cols-7 border-b border-[#ddd] py-[5px]">
            {row.map((cell, i) => <div key={i} className="whitespace-nowrap">{cell}</div>)}
          </div>
        ))}
      </div>
    </div>
  );
}

function StationSchedule() {
  return (
    <div className="flex min-w-0 flex-1 overflow-hidden bg-white">
      <div className="w-[153px] shrink-0 bg-[#f0f0f0] text-black">
        {stations.map((s) => (
          <div
            key={s}
            className={`h-[26px] border-b border-[#bbb] ${s === "Pavia@1T" ? "font-bold tracking-[0.35px] text-[#0000ff]" : "tracking-[0.03px]"}`}
          >
            {s}
          </div>
        ))}
      </div>
      <div className="w-[951px] shrink-0 border-t border-l border-[#ddd]">
        <div className="grid grid-cols-5 border-b-2 border-[#ddd] font-bold tracking-[0.1px]">
          {stationHead.map((h) => <div key={h} className="border-r border-[#ddd] py-[5px]">{h}</div>)}
        </div>
        {stationRows.map((row, r) => (
          <div key={r} className="grid grid-cols-5 border-b border-[#ddd]">
            {row.map((cell, i) => <div key={i} className="h-[30px] border-r border-[#ddd] py-[5px]">{cell}</div>)}
          </div>
        ))}
      </div>
    </div>
  );
}

function MenuItem({ label, width }: { label: string; width: string }) {
  return (
    <div className={`flex items-center ${width}`}>
      <span>{label}</span>
      <span className="mt-[3px] ml-[6px] border-x-4 border-t-4 border-x-transparent border-t-[#333]" />
    </div>
  );
}

export default function App() {
  return (
    <div className={`flex h-[990px] w-[2035px] flex-col overflow-hidden bg-white text-[14px] leading-[20px] text-[#333] ${sans}`}>
      <nav className="flex h-[25px] shrink-0 border-t border-[#a8a8a8] bg-[#d0d0d0] pt-[2px] pl-[16px]">
        <div className="flex h-[20px]">
          <MenuItem label="Edit" width="w-[58px]" />
          <MenuItem label="Run" width="w-[60px]" />
          <MenuItem label="View" width="w-[63px]" />
          <MenuItem label="Help" width="w-[60px]" />
        </div>
      </nav>
      <div className="h-[20px] shrink-0">0:00:00 (9, 1)</div>

      <main className="flex min-h-0 flex-1">
        <section className="flex w-[966px] shrink-0 flex-col">
          <PanelHeader title="Layout" icon="out" inset="right-[5px]" />
          <div className="flex h-[477px] shrink-0">
            <LayoutDiagram />
            <VBar thumb="h-[408px]" />
          </div>
          <HBar thumb="w-[491px]" />
          <Divider />
          <PanelHeader title="Schedule" icon="save" inset="right-[5px]" />
          <div className="flex h-[409px] shrink-0">
            <ScheduleTable />
            <VBar thumb="h-[18px]" />
          </div>
          <div className="h-px shrink-0 bg-[#ccc]" />
        </section>

        <div className="w-[2px] shrink-0 border-r border-[#4a4a4a] bg-[#a9a9a9]" />

        <section className="flex w-[1067px] shrink-0 flex-col">
          <PanelHeader title="Station Schedule" icon="in" inset="right-[4px]" />
          <div className="flex h-[477px] shrink-0">
            <StationSchedule />
            <VBar thumb="h-[22px]" />
          </div>
          <HBar thumb="w-[1012px]" />
          <Divider />
          <PanelHeader title="Platform Occupancy" icon="in" inset="right-[4px]" />
          <div className="flex h-[283px] shrink-0">
            <OccupancyChart />
            <VBar thumb="h-[40px]" />
          </div>
          <HBar thumb="w-[168px]" />
          <Divider />
          <PanelHeader title="Alerts" icon="save" inset="right-[4px]" />
          <div className="min-h-0 flex-1 bg-[#d3d3d3]" />
        </section>
      </main>
    </div>
  );
}
